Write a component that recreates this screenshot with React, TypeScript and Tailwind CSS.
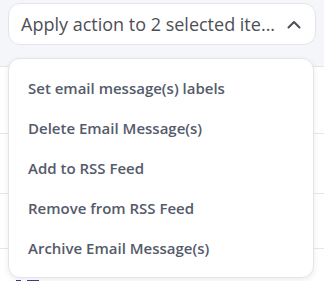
import React from "react";

const items = [
  "Set email message(s) labels",
  "Delete Email Message(s)",
  "Add to RSS Feed",
  "Remove from RSS Feed",
  "Archive Email Message(s)",
];

export default function App() {
  return (
    <div
      className="relative w-[324px] h-[281px] overflow-hidden bg-white"
      style={{ fontFamily: '"Open Sans", "Noto Sans", sans-serif' }}
    >
      <div className="h-[67px] bg-[#f5f6fa] px-[8px] pt-[3px] border-b border-[#e4e6ec]">
        <button className="flex w-full h-[42px] items-center justify-between rounded-[12px] border border-[#e3e5ea] bg-white pl-[12px] pr-[12px] text-[18px] text-[#4d4f55]">
          <span className="whitespace-nowrap">Apply action to 2 selected ite...</span>
          <svg width="14" height="9" viewBox="0 0 14 9" className="mr-[2px]">
            <path d="M1.5 7.5 L7 2 L12.5 7.5" fill="none" stroke="#4d4f55" strokeWidth="2" strokeLinecap="round" strokeLinejoin="round" />
          </svg>
        </button>
      </div>
      <div className="h-[67px] border-b border-[#e4e6ec]" />
      <div className="h-[60px] border-b border-[#e4e6ec]" />
      <div className="h-[55px] border-b border-[#e4e6ec]" />
      <div className="flex gap-[6px] pl-[16px] pt-[31px]">
        <div className="w-[5px] h-[4px] bg-[#3b3f8c]" />
        <div className="w-[12px] h-[4px] bg-[#3b3f8c]" />
      </div>
      <div className="absolute left-[8px] top-[58px] w-[306px] h-[220px] rounded-[12px] border border-[#e3e5ea] bg-white py-[9px] shadow-[0_2px_6px_rgba(0,0,0,0.08)]">
        {items.map((t) => (
          <div key={t} className="flex h-[40px] items-center px-[19px] text-[15px] font-semibold text-[#545b6b] whitespace-nowrap">
            {t}
          </div>
        ))}
      </div>
    </div>
  );
}
